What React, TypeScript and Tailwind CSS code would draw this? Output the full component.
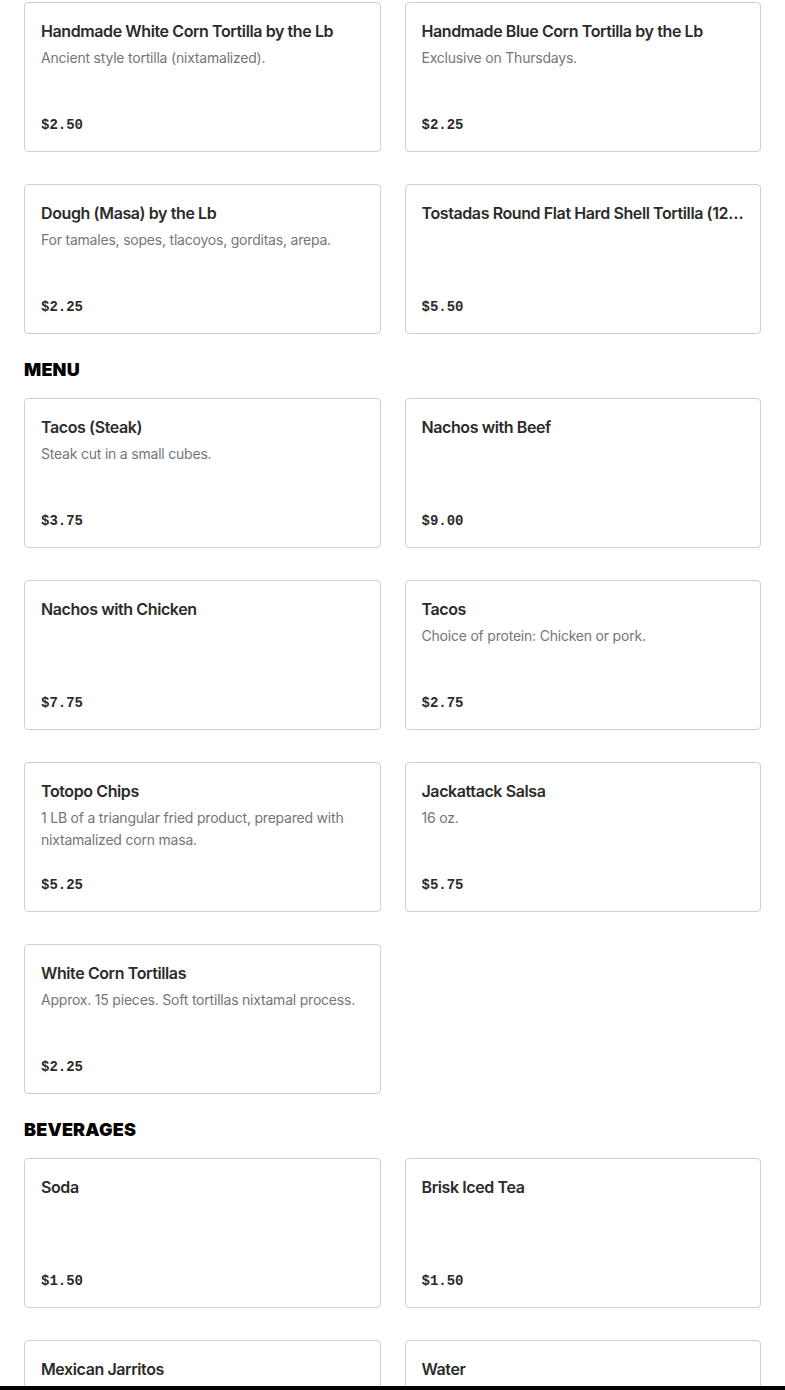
const tortillas = [
  {name: "Handmade White Corn Tortilla by the Lb", desc: "Ancient style tortilla (nixtamalized).", price: "$2.50"},
  {name: "Handmade Blue Corn Tortilla by the Lb", desc: "Exclusive on Thursdays.", price: "$2.25"},
  {name: "Dough (Masa) by the Lb", desc: "For tamales, sopes, tlacoyos, gorditas, arepa.", price: "$2.25"},
  {name: "Tostadas Round Flat Hard Shell Tortilla (12 pieces)", desc: "", price: "$5.50"},
];

const menu = [
  {name: "Tacos (Steak)", desc: "Steak cut in a small cubes.", price: "$3.75"},
  {name: "Nachos with Beef", desc: "", price: "$9.00"},
  {name: "Nachos with Chicken", desc: "", price: "$7.75"},
  {name: "Tacos", desc: "Choice of protein: Chicken or pork.", price: "$2.75"},
  {name: "Totopo Chips", desc: "1 LB of a triangular fried product, prepared with nixtamalized corn masa.", price: "$5.25"},
  {name: "Jackattack Salsa", desc: "16 oz.", price: "$5.75"},
  {name: "White Corn Tortillas", desc: "Approx. 15 pieces. Soft tortillas nixtamal process.", price: "$2.25"},
];

const beverages = [
  {name: "Soda", desc: "", price: "$1.50"},
  {name: "Brisk Iced Tea", desc: "", price: "$1.50"},
  {name: "Mexican Jarritos", desc: "", price: "$1.75"},
  {name: "Water", desc: "", price: "$1.00"},
];

type Item = {name: string; desc: string; price: string};

const ItemCard = ({item}: {item: Item}) => (
  <div className="flex h-[150px] flex-col justify-between rounded-[4px] border border-[#cfcfcf] bg-white px-4 pt-4 pb-[14px]">
    <div className="min-w-0">
      <p className="truncate text-[16px] leading-6 font-semibold tracking-[-0.025em] text-[#2b2b2b]">{item.name}</p>
      {item.desc && (
        <p className="mt-1 text-[14px] leading-[22px] tracking-[-0.015em] text-[#767676]">{item.desc}</p>
      )}
    </div>
    <p className="font-['Liberation_Mono',monospace] text-[14px] leading-6 font-bold text-[#2b2b2b]">{item.price}</p>
  </div>
);

const Grid = ({items}: {items: Item[]}) => (
  <div className="grid grid-cols-2 gap-x-6 gap-y-8">
    {items.map((item) => (
      <ItemCard key={item.name} item={item} />
    ))}
  </div>
);

const Heading = ({children}: {children: string}) => (
  <h2 className="mt-6 mb-4 text-[18px] leading-6 font-black tracking-[0.01em] text-black">{children}</h2>
);

export default function App() {
  return (
    <div className="min-h-screen bg-white px-6 pt-[2px] pb-10 font-['Inter',sans-serif]">
      <Grid items={tortillas} />
      <Heading>MENU</Heading>
      <Grid items={menu} />
      <Heading>BEVERAGES</Heading>
      <Grid items={beverages} />
      <div className="fixed right-0 bottom-0 left-0 h-1 bg-black" />
    </div>
  );
}
